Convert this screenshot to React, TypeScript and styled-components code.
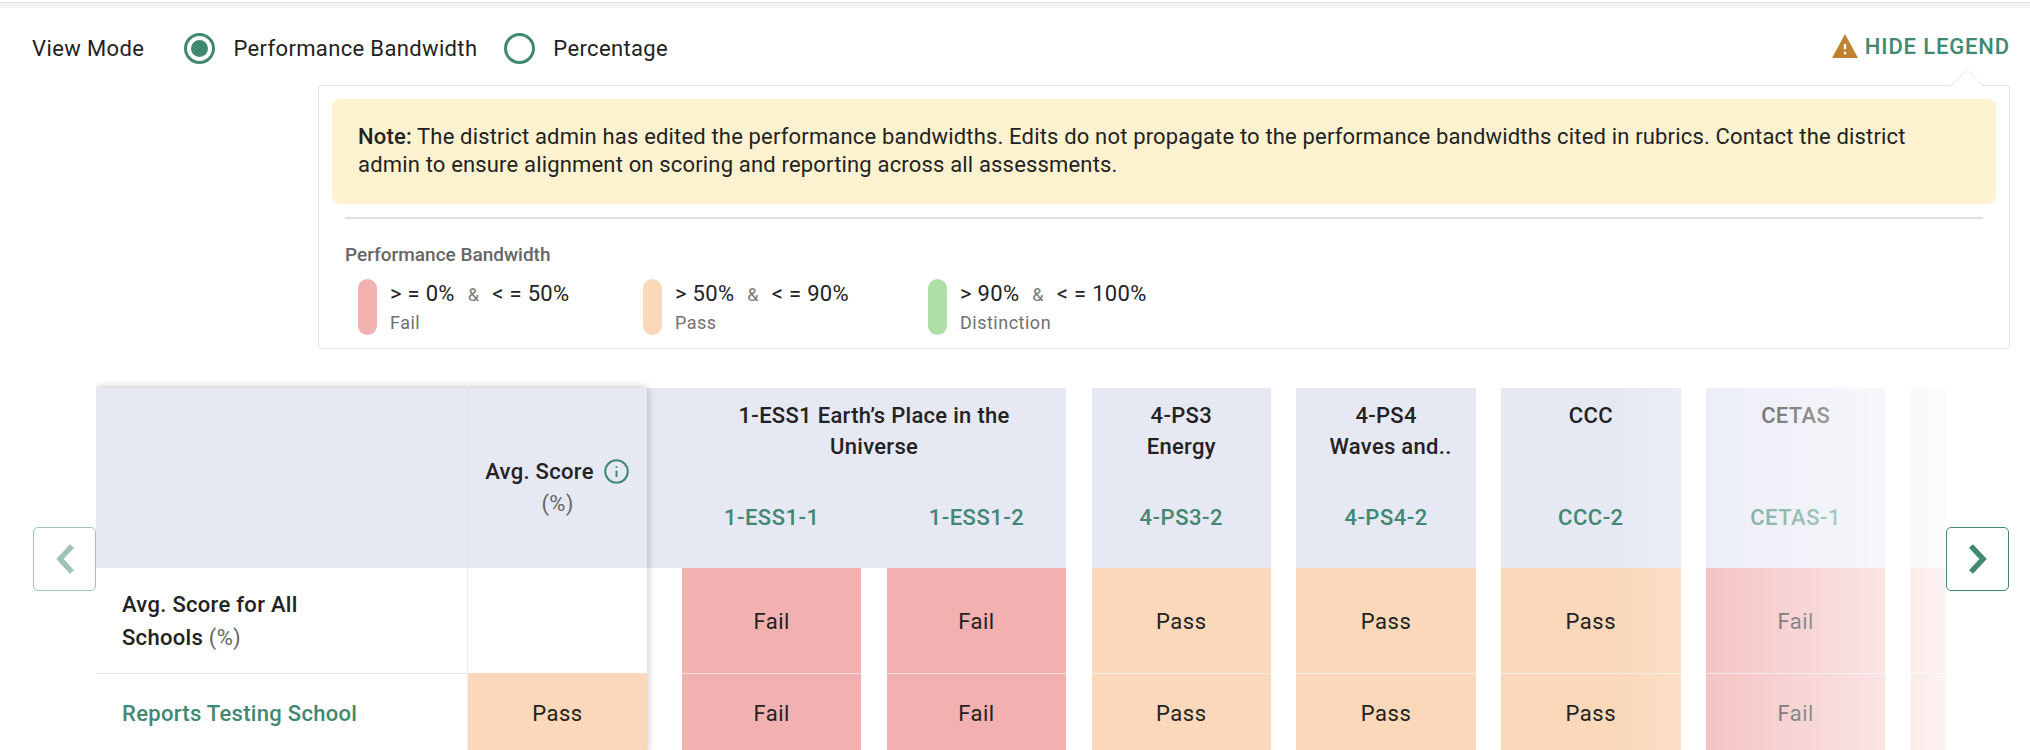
import React from "react";
import styled, { createGlobalStyle } from "styled-components";
import { Info } from "lucide-react";

const GREEN = "#418872";

const GlobalStyle = createGlobalStyle`
  html, body {
    margin: 0;
    background: #fff;
    overflow: hidden;
    height: 750px;
  }
  body {
    font-family: Roboto, "Liberation Sans", sans-serif;
    color: #222;
  }
`;

const TopBar = styled.div`
  height: 6px;
  box-sizing: border-box;
  background: #f3f3f3;
  border-top: 1px solid #dcdcdc;
  margin-top: 2px;
  margin-bottom: -2px;
`;

const Toolbar = styled.div`
  display: flex;
  align-items: center;
  height: 64px;
  margin-top: 10px;
  padding: 0 20px 0 32px;
`;

const ViewLabel = styled.span`
  font-size: 22px;
  letter-spacing: 0.4px;
  margin-right: 40px;
`;

const RadioOption = styled.label`
  display: flex;
  align-items: center;
  font-size: 22px;
  letter-spacing: 0.35px;
  margin-right: 27px;
`;

const RadioCircle = styled.span<{ $checked?: boolean }>`
  width: 31px;
  height: 31px;
  box-sizing: border-box;
  border: 3px solid ${GREEN};
  border-radius: 50%;
  margin-right: 18px;
  display: flex;
  align-items: center;
  justify-content: center;
  &::after {
    content: "";
    display: ${(p) => (p.$checked ? "block" : "none")};
    width: 17px;
    height: 17px;
    border-radius: 50%;
    background: ${GREEN};
  }
`;

const HideLegend = styled.button`
  margin-left: auto;
  display: flex;
  align-items: center;
  gap: 7px;
  border: 0;
  padding: 0;
  background: none;
  color: ${GREEN};
  font-family: inherit;
  font-size: 22px;
  font-weight: 500;
  letter-spacing: 0.85px;
  position: relative;
  top: -2px;
`;

const LegendBox = styled.div`
  position: relative;
  box-sizing: border-box;
  width: 1692px;
  height: 264px;
  margin: 5px 20px 0 auto;
  padding: 13px 13px 0;
  border: 1px solid #e3e3e3;
  border-radius: 4px;
  background: #fff;
`;

const Notch = styled.span`
  position: absolute;
  top: -12px;
  right: 29px;
  width: 24px;
  height: 24px;
  background: #fff;
  border: 1px solid #e9e9e9;
  border-bottom-color: #fff;
  border-left-color: #fff;
  border-radius: 4px;
  transform: rotate(-45deg);
  clip-path: polygon(0 0, 100% 0, 100% 100%);
`;

const Note = styled.div`
  height: 105px;
  box-sizing: border-box;
  padding: 24px 20px 0 26px;
  background: #fdf2d0;
  border-radius: 8px;
  font-size: 22px;
  line-height: 28px;
  letter-spacing: 0.17px;
  b {
    font-weight: 500;
  }
`;

const Divider = styled.hr`
  height: 2px;
  margin: 13px 13px 0;
  border: 0;
  background: #dedede;
`;

const LegendTitle = styled.div`
  margin: 26px 13px 0;
  font-size: 19px;
  line-height: 20px;
  font-weight: 500;
  color: #666;
`;

const LegendItems = styled.div`
  display: flex;
  margin: 14px 0 0 26px;
`;

const LegendItem = styled.div`
  display: flex;
  width: 285px;
  gap: 13px;
`;

const Pill = styled.span<{ $color: string }>`
  width: 19px;
  height: 56px;
  border-radius: 10px;
  background: ${(p) => p.$color};
`;

const RangeText = styled.div`
  font-size: 22px;
  line-height: 28px;
  letter-spacing: 0.3px;
  white-space: nowrap;
  padding-top: 1px;
  i {
    font-style: normal;
    font-size: 18px;
    color: #777;
    margin: 0 13px;
  }
`;

const RangeLabel = styled.div`
  font-size: 18px;
  line-height: 27px;
  letter-spacing: 0.5px;
  color: #707070;
`;

const TableSection = styled.div`
  display: flex;
  margin: 39px 21px 0 33px;
  height: 362px;
`;

const ArrowButton = styled.button<{ $muted?: boolean }>`
  flex: none;
  width: 63px;
  height: 64px;
  margin-top: 139px;
  padding: 0;
  background: #fff;
  border: 1px solid ${GREEN};
  border-radius: 5px;
  color: ${GREEN};
  opacity: ${(p) => (p.$muted ? 0.5 : 1)};
  display: flex;
  align-items: center;
  justify-content: center;
`;

const TableViewport = styled.div`
  position: relative;
  flex: 1;
  min-width: 0;
  display: flex;
  padding: 8px 0 0;
  margin-top: -8px;
  overflow: hidden;
`;

const Frozen = styled.div`
  flex: none;
  position: relative;
  z-index: 1;
  display: grid;
  grid-template-columns: 371px 180px;
  grid-template-rows: 180px 105px 80px;
  align-self: flex-start;
  background: #fff;
  box-shadow: 0 0 8px rgba(0, 0, 0, 0.28);
`;

const CornerCell = styled.div`
  background: #e6e8f4;
`;

const ScoreHead = styled.div`
  background: #e6e8f4;
  border-left: 1px solid #dcdfec;
  padding-top: 68px;
  text-align: center;
  font-size: 22px;
  font-weight: 500;
  line-height: 32px;
  letter-spacing: 0.3px;
  white-space: nowrap;
  svg {
    vertical-align: -6px;
    margin-left: 9px;
    color: ${GREEN};
  }
`;

const Muted = styled.span`
  font-weight: 400;
  color: #666;
`;

const RowHead = styled.div<{ $link?: boolean }>`
  display: flex;
  align-items: center;
  padding: 0 26px;
  border-top: ${(p) => (p.$link ? "1px solid #e2e2e2" : "0")};
  font-size: 22px;
  line-height: 33px;
  letter-spacing: 0.3px;
  font-weight: 500;
  color: ${(p) => (p.$link ? GREEN : "#222")};
  span {
    max-width: 220px;
  }
`;

const ScoreCell = styled.div<{ $bg?: string }>`
  display: flex;
  align-items: center;
  justify-content: center;
  border-left: 1px solid #eeeeee;
  background: ${(p) => p.$bg || "#fff"};
  font-size: 22px;
  letter-spacing: 0.5px;
`;

const Group = styled.div<{ $lead?: boolean }>`
  flex: none;
  width: ${(p) => (p.$lead ? "419.2px" : "179.4px")};
  margin-left: ${(p) => (p.$lead ? 0 : "25.4px")};
`;

const GroupHead = styled.div<{ $lead?: boolean }>`
  height: 180px;
  box-sizing: border-box;
  background: #e6e8f4;
  padding: 12px 0 0 ${(p) => (p.$lead ? "35px" : 0)};
  display: flex;
  flex-direction: column;
`;

const GroupTitle = styled.div`
  height: 90px;
  padding: 0 24px;
  text-align: center;
  font-size: 22px;
  font-weight: 500;
  line-height: 31px;
  letter-spacing: 0.3px;
`;

const TitleLine = styled.div<{ $indent?: boolean }>`
  white-space: nowrap;
  padding-left: ${(p) => (p.$indent ? "9px" : 0)};
`;

const CodeRow = styled.div`
  display: flex;
  gap: 25.4px;
  margin-top: 15px;
`;

const Code = styled.div`
  width: 179.4px;
  text-align: center;
  font-size: 22px;
  font-weight: 500;
  letter-spacing: 0.5px;
  line-height: 26px;
  color: ${GREEN};
`;

const CellRow = styled.div<{ $lead?: boolean }>`
  display: flex;
  gap: 25.4px;
  padding-left: ${(p) => (p.$lead ? "35px" : 0)};
`;

const BandCell = styled.div<{ $band: string; $tall?: boolean }>`
  width: 179.4px;
  height: ${(p) => (p.$tall ? "105px" : "80px")};
  box-sizing: border-box;
  display: flex;
  align-items: center;
  justify-content: center;
  padding-top: ${(p) => (p.$tall ? "2px" : 0)};
  border-top: ${(p) => (p.$tall ? "0" : "1px solid rgba(255,255,255,0.55)")};
  background: ${(p) => (p.$band === "Fail" ? "#f2b0b0" : "#fad8b9")};
  font-size: 22px;
  letter-spacing: 0.5px;
`;

const Fade = styled.div`
  position: absolute;
  top: 0;
  right: 0;
  bottom: 0;
  width: 330px;
  z-index: 2;
  pointer-events: none;
  background: linear-gradient(
    to right,
    rgba(255, 255, 255, 0) 0%,
    rgba(255, 255, 255, 0.25) 26%,
    rgba(255, 255, 255, 0.45) 54%,
    rgba(255, 255, 255, 0.65) 80%,
    rgba(255, 255, 255, 0.85) 100%
  );
`;

const legend = [
  { color: "#f3b0b0", from: "> = 0%", to: "< = 50%", label: "Fail" },
  { color: "#fad8b9", from: "> 50%", to: "< = 90%", label: "Pass" },
  { color: "#aee0a6", from: "> 90%", to: "< = 100%", label: "Distinction" },
];

const groups = [
  { title: "1-ESS1 Earth’s Place in the Universe", codes: ["1-ESS1-1", "1-ESS1-2"], bands: ["Fail", "Fail"], lead: true },
  { title: ["4-PS3", "Energy"], codes: ["4-PS3-2"], bands: ["Pass"] },
  { title: ["4-PS4", "Waves and.."], codes: ["4-PS4-2"], bands: ["Pass"] },
  { title: "CCC", codes: ["CCC-2"], bands: ["Pass"] },
  { title: "CETAS", codes: ["CETAS-1"], bands: ["Fail"] },
  { title: "", codes: [""], bands: ["Fail"] },
];

function Chevron({ left }: { left?: boolean }) {
  return (
    <svg width="22" height="32" viewBox="0 0 22 32">
      <polyline
        points={left ? "18,3 6,16 18,29" : "4,3 16,16 4,29"}
        fill="none"
        stroke="currentColor"
        strokeWidth="5.5"
      />
    </svg>
  );
}

function App() {
  return (
    <>
      <GlobalStyle />
      <TopBar />
      <Toolbar>
        <ViewLabel>View Mode</ViewLabel>
        <RadioOption>
          <RadioCircle $checked />
          Performance Bandwidth
        </RadioOption>
        <RadioOption>
          <RadioCircle />
          Percentage
        </RadioOption>
        <HideLegend>
          <svg width="26" height="24" viewBox="1 2 22 19" preserveAspectRatio="none">
            <path fill="#c1822e" d="M1 21h22L12 2 1 21zm12-3h-2v-2h2v2zm0-4h-2v-4h2v4z" />
          </svg>
          HIDE LEGEND
        </HideLegend>
      </Toolbar>

      <LegendBox>
        <Notch />
        <Note>
          <b>Note:</b> The district admin has edited the performance bandwidths. Edits do not
          propagate to the performance bandwidths cited in rubrics. Contact the district
          <br />
          admin to ensure alignment on scoring and reporting across all assessments.
        </Note>
        <Divider />
        <LegendTitle>Performance Bandwidth</LegendTitle>
        <LegendItems>
          {legend.map((item) => (
            <LegendItem key={item.label}>
              <Pill $color={item.color} />
              <div>
                <RangeText>
                  {item.from}
                  <i>&amp;</i>
                  {item.to}
                </RangeText>
                <RangeLabel>{item.label}</RangeLabel>
              </div>
            </LegendItem>
          ))}
        </LegendItems>
      </LegendBox>

      <TableSection>
        <ArrowButton $muted>
          <Chevron left />
        </ArrowButton>
        <TableViewport>
          <Frozen>
            <CornerCell />
            <ScoreHead>
              Avg. Score
              <Info size={27} strokeWidth={1.8} />
              <br />
              <Muted>(%)</Muted>
            </ScoreHead>
            <RowHead>
              <span>
                Avg. Score for All Schools <Muted>(%)</Muted>
              </span>
            </RowHead>
            <ScoreCell />
            <RowHead $link>Reports Testing School</RowHead>
            <ScoreCell $bg="#fad8b9">Pass</ScoreCell>
          </Frozen>
          {groups.map((g, i) => (
            <Group key={i} $lead={g.lead}>
              <GroupHead $lead={g.lead}>
                <GroupTitle>
                  {Array.isArray(g.title)
                    ? g.title.map((line) => (
                        <TitleLine key={line} $indent={line.endsWith("..")}>
                          {line}
                        </TitleLine>
                      ))
                    : g.title}
                </GroupTitle>
                <CodeRow>
                  {g.codes.map((c) => (
                    <Code key={c}>{c}</Code>
                  ))}
                </CodeRow>
              </GroupHead>
              <CellRow $lead={g.lead}>
                {g.bands.map((b, j) => (
                  <BandCell key={j} $band={b} $tall>
                    {i < 5 ? b : ""}
                  </BandCell>
                ))}
              </CellRow>
              <CellRow $lead={g.lead}>
                {g.bands.map((b, j) => (
                  <BandCell key={j} $band={b}>
                    {i < 5 ? b : ""}
                  </BandCell>
                ))}
              </CellRow>
            </Group>
          ))}
          <Fade />
        </TableViewport>
        <ArrowButton>
          <Chevron />
        </ArrowButton>
      </TableSection>
    </>
  );
}

export default App;
